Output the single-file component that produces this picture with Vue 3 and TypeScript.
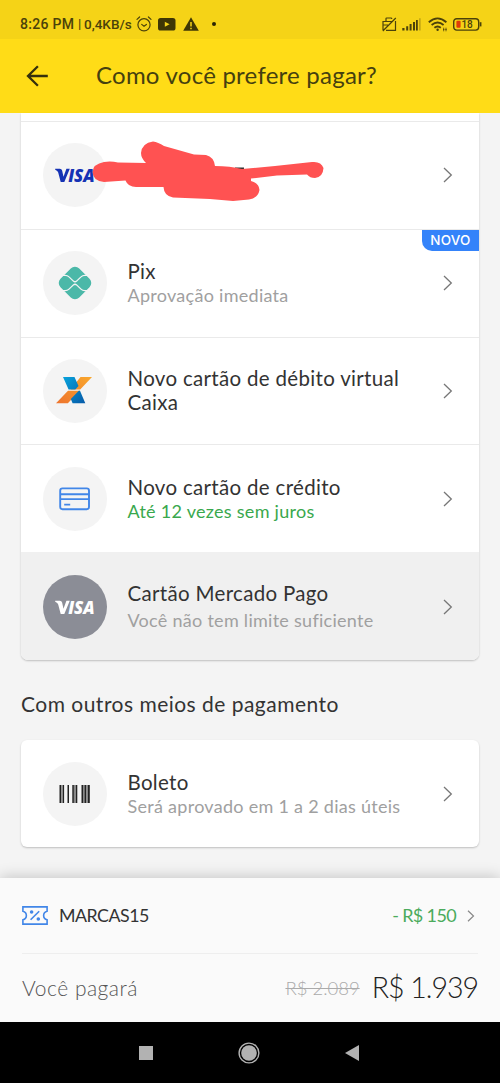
<script setup lang="ts">
type Icon = 'visa' | 'pix' | 'caixa' | 'card' | 'visa-gray'

interface Method {
  icon: Icon
  title?: string
  subtitle?: string
  tone?: 'muted' | 'green'
  cls: string
  badge?: string
  disabled?: boolean
}

const methods: Method[] = [
  { icon: 'visa', cls: 'm-visa' },
  { icon: 'pix', title: 'Pix', subtitle: 'Aprovação imediata', tone: 'muted', badge: 'NOVO', cls: 'm-pix' },
  { icon: 'caixa', title: 'Novo cartão de débito virtual Caixa', cls: 'm-caixa' },
  { icon: 'card', title: 'Novo cartão de crédito', subtitle: 'Até 12 vezes sem juros', tone: 'green', cls: 'm-card' },
  { icon: 'visa-gray', title: 'Cartão Mercado Pago', subtitle: 'Você não tem limite suficiente', tone: 'muted', disabled: true, cls: 'm-mp' },
]
</script>

<template>
  <div class="phone">
    <div class="status">
      <span class="clock">8:26 PM</span><span class="bar">|</span><span class="speed">0,4KB/s</span>
      <svg class="s-alarm" width="16" height="16" viewBox="0 0 16 16" fill="none" stroke="#4b420a" stroke-width="1.2" stroke-linecap="round">
        <circle cx="8" cy="8.8" r="6.1" /><path d="M5.7 8.4 8 10.2l2.4-1.8M1 3.4 3.6 1M15 3.4 12.4 1" />
      </svg>
      <svg class="s-tube" width="18" height="13" viewBox="0 0 18 13"><rect width="17.5" height="12.6" rx="2.6" fill="#3e3605" /><path d="M6.8 3.8v5l4.8-2.5z" fill="#f6d51a" /></svg>
      <svg class="s-warn" width="16" height="14" viewBox="0 0 16 14"><path d="M8 .2 15.8 13.8H.2z" fill="#3e3605" /><path d="M8 5v4.6M8 10.8v1.5" stroke="#f6d51a" stroke-width="1.5" /></svg>
      <i class="s-dot"></i>
      <div class="s-right">
        <svg width="15" height="15" viewBox="0 0 15 15" fill="none" stroke="#4b420a" stroke-width="1.2">
          <path d="M4 4V1.6q0-.6.7-.6H9q.7 0 .7.6V2M1 13V4.5h8.6M1 8h5M13.5 4v9.3H4M.8 14 13.8 1" />
        </svg>
        <svg width="19" height="13" viewBox="0 0 19 13" fill="#4b420a">
          <path d="M.3 10h2.2v2.5H.3zM4.2 8.2h2v4.3h-2zM7.6 6h2v6.5h-2zM11 4h2v8.5h-2zM14 2h1.8v10.5H14z" /><path d="M17 .2h1.7v12.3H17z" opacity=".3" />
        </svg>
        <svg width="20" height="15" viewBox="0 0 20 15" fill="none" stroke="#4b420a" stroke-width="1.8">
          <path d="M.8 5.2Q9.5-2.4 18.4 5.2M3.6 8q6-5 12 0M6.4 10.8q3.2-2.6 6.4 0" /><circle cx="9.6" cy="12.8" r="1.2" fill="#4b420a" stroke="none" /><path d="M15.7 10.7v3.6M18 10.7v3.6M15 12.5h1.4M17.3 12.5h1.4" stroke-width=".8" />
        </svg>
        <svg width="29" height="13" viewBox="0 0 29 13">
          <rect x=".7" y=".7" width="25" height="11.4" rx="3" fill="none" stroke="#4b420a" stroke-width="1.4" /><rect x="3.4" y="2.8" width="4.2" height="7" rx="1" fill="#e03c08" /><path d="M27.6 4.2v4.2" stroke="#4b420a" stroke-width="1.7" /><text x="8.4" y="10.1" class="batt">18</text>
        </svg>
      </div>
    </div>

    <header class="header">
      <svg width="22" height="22" viewBox="0 0 22 22" fill="none" stroke="#35300c" stroke-width="2.3"><path d="M21.8 11H2M11.9 1.2 2 11l9.9 9.8" /></svg>
      <h1>Como você prefere pagar?</h1>
    </header>

    <main class="content">
      <section class="panel top">
        <div v-for="m in methods" :key="m.cls" class="row" :class="[m.cls, { disabled: m.disabled }]">
          <span class="circle" :class="m.icon">
            <svg v-if="m.icon === 'visa' || m.icon === 'visa-gray'" width="64" height="64" viewBox="0 0 64 64" :fill="m.icon === 'visa' ? '#1532b4' : '#fff'">
              <path d="M12.2 25.8h4.6q1.9.1 2.3 1.7l1.4 6.200 2.900-7.900h3.400l-5.500 13.200h-3.600l-2.500-9.400q-.4-1.800-3-2.900z" />
              <text x="25.200" y="39.100" class="visa-text" textLength="26.500" lengthAdjust="spacingAndGlyphs">ISA</text>
            </svg>
            <svg v-else-if="m.icon === 'pix'" width="34" height="34" viewBox="0 0 34 34">
              <rect x="3.750" y="3.750" width="26.500" height="26.500" rx="6" transform="rotate(45 17 17)" fill="#4bb8a8" />
              <path d="M2 9.300h5.200q2.200 0 3.800 1.600l4.400 4.200q1.600 1.400 3.200 0l4.400-4.200q1.600-1.600 3.800-1.600H32M2 24.700h5.200q2.200 0 3.800-1.600l4.400-4.200q1.600-1.400 3.200 0l4.400 4.200q1.600 1.600 3.800 1.600H32" fill="none" stroke="#f4f4f4" stroke-width="1.300" />
            </svg>
            <svg v-else-if="m.icon === 'caixa'" class="caixa-logo" width="36" height="27" viewBox="0 0 36 27">
              <defs>
                <linearGradient id="cxBlue" x1="0" y1="0" x2="1" y2="1"><stop stop-color="#08a3dc" /><stop offset="1" stop-color="#075aa8" /></linearGradient>
                <linearGradient id="cxOrange" x1="1" y1="0" x2="0" y2="1"><stop stop-color="#f9a72c" /><stop offset="1" stop-color="#ee742e" /></linearGradient>
              </defs>
              <path d="M24.500 0H36L24.200 12.400h-9.600zM12 13.700h12L11.800 26.300H0z" fill="url(#cxOrange)" />
              <path d="M7 0h11.500l4 9-3.200 3.400H12.600zM22.800 13.700h1.200l5.300 12.600H16.600l-1.800-4.200z" fill="url(#cxBlue)" />
            </svg>
            <svg v-else width="32" height="24" viewBox="0 0 32 24" fill="none" stroke="#4186e8" stroke-width="1.900">
              <rect x="1.200" y="1.400" width="28.800" height="20.800" rx="2.300" /><path d="M1 7.300h29M1 12.100h29M5.200 17.600h6" />
            </svg>
          </span>
          <div class="text">
            <span v-if="m.title" class="title">{{ m.title }}</span>
            <span v-if="m.subtitle" class="sub" :class="m.tone">{{ m.subtitle }}</span>
          </div>
          <svg class="chev" width="10" height="16" viewBox="0 0 10 16" fill="none" stroke="#777" stroke-width="1.300"><path d="m1 1 7.300 7L1 15" /></svg>
          <span v-if="m.badge" class="badge">{{ m.badge }}</span>
          <!-- hand-drawn redaction over the card number -->
          <svg v-if="m.icon === 'visa'" class="scribble" width="236" height="64" viewBox="92 140 236 64">
            <path d="M235 168.200h9M250 179v3" stroke="#333" stroke-width="1.600" />
            <path d="M104 162Q111 161 118 162.500L146 163Q141 158 141 153 142 143 153 141.500 158 142 164 146L194 154.500 206 155Q214 157 215 166 230 166 242 169L275 166 312 162Q321 161 323.500 168 323 177 315 178 310 178 307 174.500L277 175.500 251 178.500V181Q259 183 259.500 190 258 198 249 199.500L233 201 210 199 173 197.500Q164 196 163.500 187L136 187Q128 187 125.500 180.500L104 182Q93 181 92.500 172 93 164 104 162Z" fill="#ff5252" />
          </svg>
        </div>
      </section>

      <h2>Com outros meios de pagamento</h2>

      <section class="panel single">
        <div class="row m-boleto">
          <span class="circle">
            <svg width="32" height="18" viewBox="0 0 32 18">
              <path d="M.5 0h1.800v18H.5zM3.500 0h1.600v18H3.500zM8.500 0h1.500v18H8.500zM13.300 0h1.600v18h-1.600zM16.500 0h1.800v18h-1.800zM22.500 0h1.500v18h-1.500zM25.300 0h1.800v18h-1.800zM29 0h1.800v18H29z" fill="#222" /><path d="M2.300 0h1.200v18H2.300zM14.900 0h1.600v18h-1.600zM24 0h1.300v18H24zM27.100 0H29v18h-1.900z" fill="#888" />
            </svg>
          </span>
          <div class="text"><span class="title">Boleto</span><span class="sub muted">Será aprovado em 1 a 2 dias úteis</span></div>
          <svg class="chev" width="10" height="16" viewBox="0 0 10 16" fill="none" stroke="#777" stroke-width="1.300"><path d="m1 1 7.300 7L1 15" /></svg>
        </div>
      </section>
    </main>

    <footer class="summary">
      <div class="coupon">
        <svg width="26" height="19" viewBox="0 0 26 19" fill="none" stroke="#4186e8" stroke-width="1.600">
          <path d="M.9.9h24.200v4.300a4.400 4.400 0 0 0 0 8.600v4.300H.9v-4.300a4.400 4.400 0 0 0 0-8.600z" /><path d="m8.600 13.800 8.600-8.600" /><g fill="#4186e8" stroke="none"><circle cx="9.600" cy="6" r="1.800" /><circle cx="16.300" cy="13" r="1.800" /></g>
        </svg>
        <span class="code">MARCAS15</span>
        <span class="discount">- R$ 150</span>
        <svg class="small-chev" width="8" height="12" viewBox="0 0 8 12" fill="none" stroke="#888" stroke-width="1.200"><path d="m1 .7 5.500 5.300L1 11.300" /></svg>
      </div>
      <div class="total">
        <span class="label">Você pagará</span>
        <span class="old">R$ 2.089</span>
        <span class="price">R$ 1.939</span>
      </div>
    </footer>

    <nav class="nav">
      <svg width="14" height="14"><rect width="14" height="14" fill="#b2b2b2" /></svg>
      <svg width="22" height="22" viewBox="0 0 22 22"><circle cx="11" cy="11" r="9.900" fill="none" stroke="#b2b2b2" stroke-width="1.400" /><circle cx="11" cy="11" r="7.800" fill="#b2b2b2" /></svg>
      <svg width="14" height="16"><path d="M14 0v16L0 8z" fill="#b2b2b2" /></svg>
    </nav>
  </div>
</template>

<style>
body { margin: 0; }
</style>

<style scoped>
.phone {
  width: 500px;
  height: 1083px;
  display: flex;
  flex-direction: column;
  overflow: hidden;
  background: #f4f4f4;
  color: #333;
  font-family: Lato, "Liberation Sans", sans-serif;
}
h1, h2 { margin: 0; font-weight: 400; white-space: nowrap; }
svg { display: block; flex: none; }
.status {
  height: 39px;
  flex: none;
  box-sizing: border-box;
  padding: 9px 18px 0 20px;
  display: flex;
  align-items: center;
  background: #f5d317;
  color: #4b420a;
  font: 500 14px/30px Roboto, sans-serif;
  white-space: nowrap;
}
.clock { width: 58px; letter-spacing: .3px; }
.bar { width: 6px; font-size: 13px; }
.speed { width: 52px; font-size: 13.5px; }
.s-tube { margin-left: 6px; }
.s-warn { margin-left: 7px; }
.s-dot { width: 4px; height: 4px; margin-left: 13px; border-radius: 50%; background: #2b2504; }
.s-right { margin-left: auto; display: flex; align-items: center; gap: 5px; }
.s-right svg:nth-child(3) { margin-left: 2px; }
.batt { font: 500 10px Roboto, sans-serif; fill: #4b420a; }
.header {
  height: 74px;
  flex: none;
  display: flex;
  align-items: center;
  padding-left: 26px;
  background: #ffdc17;
}
.header h1 { margin: -2px 0 0 48px; font-size: 24px; line-height: 30px; letter-spacing: .24px; color: #45400f; }
.content { flex: none; height: 765px; padding: 0 21px; }
.panel {
  background: #fff;
  border-radius: 6px;
  box-shadow: 0 1px 2px rgba(0, 0, 0, .22);
}
.top { height: 547px; box-sizing: border-box; padding-top: 8px; border-radius: 0 0 7px 7px; }
.row {
  position: relative;
  height: 107.8px;
  box-sizing: border-box;
  border-top: 1.5px solid #eaeaea;
  display: flex;
  align-items: center;
  padding: 0 26px 0 21.5px;
}
.disabled { background: #f0f0f0; border-top-color: #f0f0f0; border-radius: 0 0 7px 7px; }
.circle {
  width: 64px;
  height: 64px;
  flex: none;
  border-radius: 50%;
  background: #f4f4f4;
  display: flex;
  align-items: center;
  justify-content: center;
}
.circle.visa-gray { background: #8b8d96; }
.visa-text { font: italic 800 18.2px "Open Sans", sans-serif; }
.caixa-logo { margin-left: -2px; }
.text { margin: 1px 0 0 21px; width: 290px; display: flex; flex-direction: column; }
.m-caixa .text, .m-mp .text { margin-top: -1px; }
.title { font-size: 20.5px; line-height: 24px; letter-spacing: .32px; }
.sub { font-size: 18px; line-height: 25px; letter-spacing: .28px; white-space: nowrap; }
.muted { color: #a0a0a0; }
.green { color: #39a84d; }
.m-mp .title { line-height: 28px; }
.m-mp .sub { line-height: 27px; }
.chev { margin-left: auto; }
.badge {
  position: absolute;
  top: 0;
  right: 0;
  width: 57px;
  height: 21px;
  border-radius: 0 0 0 10px;
  background: #3483fa;
  color: #fff;
  font: 500 13.5px/21px Inter, sans-serif;
  letter-spacing: .2px;
  text-align: center;
}
.scribble { position: absolute; left: 71px; top: 18px; }
h2 { margin: 28px 0 21px; font-size: 21px; line-height: 31px; letter-spacing: .48px; color: #333; }
.single { height: 107px; }
.single .row { height: 107px; border-top: 0; }
.summary {
  height: 144px;
  flex: none;
  background: #fafafa;
  box-shadow: 0 -1px 14px rgba(0, 0, 0, .2);
  box-sizing: border-box;
  padding: 0 22px;
}
.coupon { height: 76px; box-sizing: border-box; border-bottom: 1px solid #eee; display: flex; align-items: center; }
.code { margin: -2px 0 0 11px; font-size: 17.8px; letter-spacing: -.5px; }
.discount { margin: -2px 0 0 auto; font-size: 18px; letter-spacing: -.65px; color: #4bab5c; }
.small-chev { margin: 0 3px 0 11px; }
.total { height: 68px; display: flex; align-items: center; white-space: nowrap; }
.label { margin-top: -2px; font-size: 21px; letter-spacing: .5px; font-weight: 300; color: #555; }
.old { margin-left: auto; font-size: 18.5px; font-weight: 300; color: #aaa; text-decoration: line-through; }
.price { margin: -2px 0 0 12px; font-size: 28.5px; letter-spacing: -1px; font-weight: 300; color: #222; }
.nav {
  height: 61px;
  flex: none;
  box-sizing: border-box;
  padding-right: 2px;
  background: #000;
  display: flex;
  align-items: center;
  justify-content: center;
  gap: 85px;
}
</style>
